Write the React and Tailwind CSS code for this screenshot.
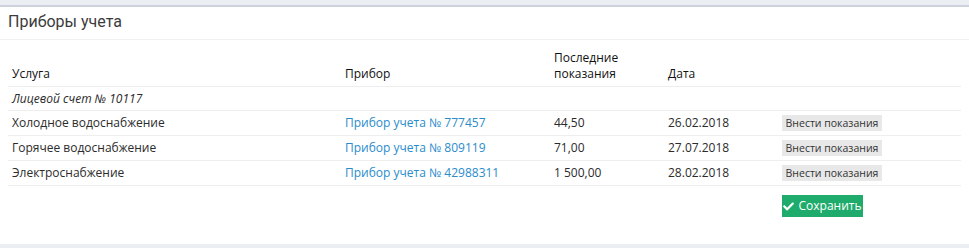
import React from 'react';

const ROWS = [
    { service: 'Холодное водоснабжение', meter: 'Прибор учета № 777457', value: '44,50', date: '26.02.2018' },
    { service: 'Горячее водоснабжение', meter: 'Прибор учета № 809119', value: '71,00', date: '27.07.2018' },
    { service: 'Электроснабжение', meter: 'Прибор учета № 42988311', value: '1 500,00', date: '28.02.2018' }
];

const CheckIcon = () => (
    <svg viewBox="0 0 512 512" className="w-[11px] h-[11px] shrink-0 fill-white">
        <path d="M173.898 439.404l-166.4-166.4c-9.997-9.997-9.997-26.206 0-36.204l36.203-36.204c9.997-9.998 26.207-9.998 36.204 0L192 312.69 432.095 72.596c9.997-9.997 26.207-9.997 36.204 0l36.203 36.204c9.997 9.997 9.997 26.206 0 36.204l-294.4 294.401c-9.998 9.997-26.207 9.997-36.204-.001z" />
    </svg>
);

const App = () => {
    return (
        <div className="w-[969px] h-[248px] bg-[#ebeff3] pt-[5px] font-['Open_Sans',sans-serif] text-[12px] leading-4 text-[#2b2b2b]">
            <div className="border-t-2 border-[#cdd2dc] bg-white">
                {/* Heading */}
                <div className="h-[33px] border-b border-[#f0f0f0] px-2 pt-[5px]">
                    <h2 className="font-['Roboto',sans-serif] text-[16px] leading-5 text-[#3c3c3c]">Приборы учета</h2>
                </div>

                {/* Body */}
                <div className="px-2 pt-[6px] pb-[27px]">
                    <table className="w-full border-collapse text-left">
                        <colgroup>
                            <col className="w-[333px]" />
                            <col className="w-[209px]" />
                            <col className="w-[114px]" />
                            <col className="w-[114px]" />
                            <col />
                        </colgroup>
                        <thead>
                            <tr className="border-b border-[#eeeeee] align-bottom">
                                <th className="px-1 py-1 font-normal text-[#111]">Услуга</th>
                                <th className="px-1 py-1 font-normal text-[#111]">Прибор</th>
                                <th className="px-1 py-1 font-normal text-[#111]">Последние<br />показания</th>
                                <th className="px-1 py-1 font-normal text-[#111]">Дата</th>
                                <th className="px-1 py-1"></th>
                            </tr>
                        </thead>
                        <tbody>
                            <tr className="border-b border-[#eeeeee]">
                                <td colSpan={5} className="px-1 pt-1 pb-[3px] italic">Лицевой счет № 10117</td>
                            </tr>
                            {ROWS.map((row) => (
                                <tr key={row.meter} className="border-b border-[#eeeeee] align-middle">
                                    <td className="px-1 py-1">{row.service}</td>
                                    <td className="px-1 py-1">
                                        <a href="#" className="text-[#2a8ccb]">{row.meter}</a>
                                    </td>
                                    <td className="px-1 py-1">{row.value}</td>
                                    <td className="px-1 py-1">{row.date}</td>
                                    <td className="px-1 py-1">
                                        <button className="block h-4 w-[100px] bg-[#e8e8e8] text-[10.5px] leading-4 text-[#333]">
                                            Внести показания
                                        </button>
                                    </td>
                                </tr>
                            ))}
                        </tbody>
                    </table>

                    {/* Save */}
                    <div className="pl-[774px] pt-[9px]">
                        <button className="flex items-center justify-center gap-[4px] h-[22px] w-[81px] bg-[#1fab6b] text-white text-[12px]">
                            <CheckIcon />
                            Сохранить
                        </button>
                    </div>
                </div>
            </div>
        </div>
    );
};

export default App;
